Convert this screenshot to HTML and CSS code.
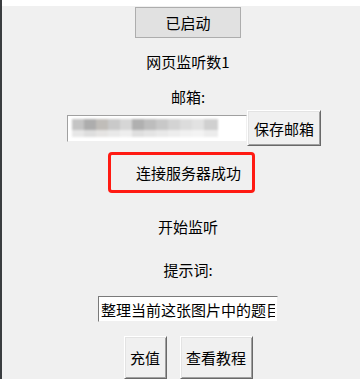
FILE: index.html
```html
<!DOCTYPE html>
<html lang="zh-CN">

<head>
    <meta charset="UTF-8">
    <meta name="viewport" content="width=device-width, initial-scale=1.0">
    <title>网页监听</title>
    <link rel="stylesheet" href="styles.css">
</head>

<body>
    <div class="top-strip"></div>
    <section class="app-window">
        <button class="status-btn">已启动</button>
        <p class="label count">网页监听数1</p>
        <p class="label email-label">邮箱:</p>
        <div class="email-row">
            <div class="email-input">
                <span class="blurred"></span>
            </div>
            <button class="win-btn save-btn">保存邮箱</button>
        </div>
        <div class="conn-box">连接服务器成功</div>
        <p class="label listen">开始监听</p>
        <p class="label prompt-label">提示词:</p>
        <input type="text" class="prompt-input" value="整理当前这张图片中的题目" readonly>
        <div class="action-row">
            <button class="win-btn pay-btn">充值</button>
            <button class="win-btn guide-btn">查看教程</button>
        </div>
    </section>
</body>

</html>
```

FILE: styles.css
```css
html,
body {
    margin: 0;
    height: 100%;
    overflow: hidden;
}

body {
    background: #f0f0f0;
    font-family: "Noto Sans CJK SC", "Microsoft YaHei", sans-serif;
    font-size: 15px;
    color: #000;
}

.top-strip {
    height: 6px;
    background: #fff;
    border-left: 2px solid #3a3d40;
}

.app-window {
    display: flex;
    flex-direction: column;
    align-items: center;
    min-height: 373px;
    padding-left: 14px;
    border-left: 2px solid #3a3d40;
}

button {
    font-family: inherit;
    font-size: 15px;
    color: #000;
    padding: 0;
    line-height: 1;
}

.label {
    margin: 0;
    height: 20px;
    line-height: 20px;
}

.status-btn {
    margin-top: 1px;
    width: 106px;
    height: 31px;
    background: #e1e1e1;
    border: 1px solid #adadad;
}

.count {
    margin-top: 14px;
}

.email-label {
    margin-top: 15px;
}

.email-row {
    display: flex;
    align-items: center;
    margin-top: 3px;
    margin-left: 12px;
    height: 36px;
}

.email-input {
    box-sizing: border-box;
    width: 180px;
    height: 27px;
    padding: 3px 4px;
    background: #fff;
    border: 1px solid;
    border-color: #a0a0a0 #f0f0f0 #f0f0f0 #a0a0a0;
    overflow: hidden;
}

/* 打码后的邮箱 */
.blurred {
    display: block;
    width: 146px;
    height: 18px;
    filter: blur(1px);
    background:
        linear-gradient(to bottom, transparent 0 11px, rgba(255, 255, 255, 0.6) 11px 18px),
        linear-gradient(to right,
            #c4c4c4 0 12px, #adadad 12px 24px, #c0bdb9 24px 36px, #c9c9c9 36px 48px,
            #d6d6d6 48px 60px, #b0b0b0 60px 72px, #bdbdbd 72px 84px, #c8c8c8 84px 96px,
            #d3d3d3 96px 108px, #dcdcdc 108px 120px, #e2e2e2 120px 132px, #d0d0d0 132px 146px);
}

.win-btn {
    box-sizing: border-box;
    background: #f0f0f0;
    border: 1px solid;
    border-color: #fff #696969 #696969 #fff;
    box-shadow: inset 1px 1px #e3e3e3, inset -1px -1px #a0a0a0;
}

.save-btn {
    width: 74px;
    height: 36px;
}

.conn-box {
    box-sizing: border-box;
    margin-top: 6px;
    margin-right: 13px;
    width: 147px;
    height: 41px;
    padding-left: 25px;
    line-height: 35px;
    border: 3px solid #ff1a12;
    border-radius: 4px;
}

.listen {
    margin-top: 24px;
}

.prompt-label {
    margin-top: 23px;
}

.prompt-input {
    box-sizing: border-box;
    margin-top: 16px;
    width: 180px;
    height: 26px;
    padding: 0 2px;
    font-family: inherit;
    font-size: 15px;
    color: #000;
    background: #fff;
    border: 1px solid;
    border-color: #7a7a7a #f0f0f0 #f0f0f0 #7a7a7a;
    outline: none;
}

.action-row {
    display: flex;
    gap: 13px;
    margin-top: 14px;
}

.pay-btn {
    width: 43px;
    height: 43px;
}

.guide-btn {
    width: 73px;
    height: 43px;
}
```
